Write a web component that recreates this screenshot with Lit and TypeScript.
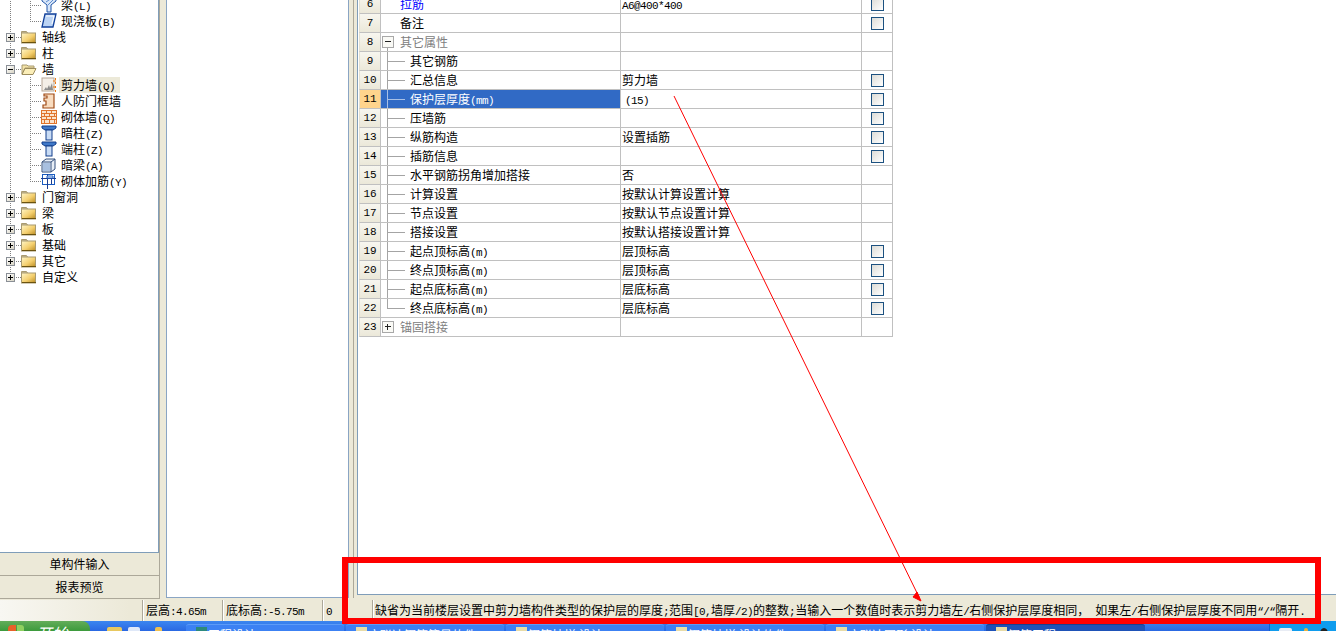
import { LitElement, html, css, svg } from "lit";
import { customElement } from "lit/decorators.js";

const t = (s: string) =>
  s.split(/([\x20-\x7e\u201c]+)/).map((p, i) => (i % 2 ? html`<span class="lat">${p}</span>` : p));

const folder = (open = false) => html`<svg class="folder" width="16" height="14" viewBox="0 0 16 14">
  <defs><linearGradient id="fg" x1="0" y1="0" x2="1" y2="1"><stop offset="0" stop-color="#fff6c8"/><stop offset=".55" stop-color="#f4cf6e"/><stop offset="1" stop-color="#b98a20"/></linearGradient></defs>
  ${open
    ? svg`<path d="M1 12V3h5l1 1h6v2H4L1 12z" fill="#f3e2a6" stroke="#a89a70"/><path d="M1 12.5 4 6.500h11l-3 6z" fill="#fbeeb8" stroke="#9c8c5c"/>`
    : svg`<path d="M.5 3V1.500h5l1 1.500z" fill="#e8e0c4" stroke="#a89a70"/><rect x=".5" y="3" width="14" height="10" fill="url(#fg)" stroke="#a89a70"/><path d="M1 12.500h14" stroke="#6b5310"/>`}
</svg>`;

const blueT = svg`<path d="M1 1h14v2l-3 2H4L1 3z" fill="#3f78c8" stroke="#123f8c"/><rect x="5" y="5" width="6" height="10" fill="#c9dcf5" stroke="#123f8c"/>`;
const icons: Record<string, unknown> = {
  beam: svg`<path d="M1 1h14v3l-5 4v7H6V8L1 4z" fill="#d8e6f8" stroke="#1f55a8"/><path d="M5 5l6-4M7 8l5-5" stroke="#5c8bd0"/>`,
  slab: svg`<path d="M4 1h11l-3 13H1z" fill="#bcd4f4" stroke="#12409a" stroke-width="1.3"/><path d="M5 3h8l-2 8" fill="none" stroke="#fff"/>`,
  shear: svg`<rect x="1" y="1" width="12" height="13" fill="#f4efe8" stroke="#b8a898"/><path d="M3 13l2-3 1 2 2-4 1 3 2-5 1 7z" fill="#8c8c8c"/><path d="M14.500 1v14" stroke="#f07a10" stroke-dasharray="2 2"/><path d="M12 4h3M12 10h3" stroke="#f07a10"/>`,
  door: svg`<path d="M3 1h10v14H2v-3h3V8H3V5h3V3H3z" fill="#f8dcc0" stroke="#a04c18" stroke-width="1.2"/>`,
  brick: svg`<rect x=".5" y="1.500" width="15" height="13" fill="#fbe3cc" stroke="#e0742c"/><path d="M1 4.500h14M1 7.500h14M1 10.500h14M5.500 2v2M10.500 2v2M3.500 5v2M8.500 5v2M13.500 5v2M5.500 8v2M10.500 8v2M3.500 11v3M8.500 11v3M13.500 11v3" stroke="#e0742c"/>`,
  col: blueT,
  box: svg`<path d="M1 5l4-3h9v10l-4 3H1z" fill="#e8eef6" stroke="#34507c"/><path d="M1 5h9v10M10 5l4-3" fill="none" stroke="#34507c"/><path d="M2 6h7v8H2z" fill="#a8c0e0"/>`,
  rebar: svg`<rect x="1.500" y="1.500" width="12" height="10" fill="none" stroke="#1a5cc0"/><path d="M0 5.500h15M6.500 1v15M10.500 5v6" stroke="#1a3c90"/><path d="M6 3h6v2H6z" fill="#fff" stroke="#1a5cc0"/>`,
};
const ico = (k: string) => html`<svg class="ico" width="16" height="16" viewBox="0 0 16 16">${icons[k]}</svg>`;

const topFolders = ["轴线", "柱"];
const wall = [
  ["剪力墙(Q)", "shear"], ["人防门框墙", "door"], ["砌体墙(Q)", "brick"], ["暗柱(Z)", "col"],
  ["端柱(Z)", "col"], ["暗梁(A)", "box"], ["砌体加筋(Y)", "rebar"],
];
const restFolders = ["门窗洞", "梁", "板", "基础", "其它", "自定义"];

type Row = { n: number; name: string; val?: string; chk?: boolean; kind?: string };
const rows: Row[] = [
  { n: 6, name: "拉筋", val: "A6@400*400", chk: true, kind: "blue" },
  { n: 7, name: "备注", chk: true, kind: "plain" },
  { n: 8, name: "其它属性", kind: "minus" },
  { n: 9, name: "其它钢筋", kind: "branch" },
  { n: 10, name: "汇总信息", val: "剪力墙", chk: true, kind: "branch" },
  { n: 11, name: "保护层厚度(mm)", val: "(15)", chk: true, kind: "branch sel" },
  { n: 12, name: "压墙筋", chk: true, kind: "branch" },
  { n: 13, name: "纵筋构造", val: "设置插筋", chk: true, kind: "branch" },
  { n: 14, name: "插筋信息", chk: true, kind: "branch" },
  { n: 15, name: "水平钢筋拐角增加搭接", val: "否", kind: "branch" },
  { n: 16, name: "计算设置", val: "按默认计算设置计算", kind: "branch" },
  { n: 17, name: "节点设置", val: "按默认节点设置计算", kind: "branch" },
  { n: 18, name: "搭接设置", val: "按默认搭接设置计算", kind: "branch" },
  { n: 19, name: "起点顶标高(m)", val: "层顶标高", chk: true, kind: "branch" },
  { n: 20, name: "终点顶标高(m)", val: "层顶标高", chk: true, kind: "branch" },
  { n: 21, name: "起点底标高(m)", val: "层底标高", chk: true, kind: "branch" },
  { n: 22, name: "终点底标高(m)", val: "层底标高", chk: true, kind: "branch last" },
  { n: 23, name: "锚固搭接", kind: "plus" },
];

const help = "缺省为当前楼层设置中剪力墙构件类型的保护层的厚度;范围[0,墙厚/2)的整数;当输入一个数值时表示剪力墙左/右侧保护层厚度相同， 如果左/右侧保护层厚度不同用\u201c/\u201c隔开.";
const tasks = ["工程设计", "广联达钢筋算量软件", "钢筋抽样 设计", "钢筋抽样 设计软件", "广联达图形 设计", "钢筋工程"];

@customElement("app-root")
export class AppRoot extends LitElement {
  static styles = css`
    :host { display: block; position: relative; width: 1336px; height: 631px; overflow: hidden; background: #ece9d8;
      font: 12px/16px "Noto Sans CJK SC", "Noto Sans CJK JP", sans-serif; color: #000; }
    .lat { font: 11px/12px "Liberation Mono", monospace; letter-spacing: -0.6px; }
    .main { display: flex; height: 600px; }
    .left { width: 159px; height: 599px; display: flex; flex-direction: column; flex: none; border-right: 1px solid #aca899; box-sizing: content-box; }
    .tree { flex: none; height: 553px; background: #fff; border-bottom: 1px solid #7f9db9; border-right: 1px solid #7f9db9; overflow: hidden; box-sizing: border-box; width: 159px; }
    .tree-in { margin-top: -3px; }
    .tr { display: flex; align-items: center; height: 16px; white-space: nowrap; }
    .gut { flex: none; width: 21px; height: 16px; padding-left: 6px; box-sizing: border-box; display: flex; align-items: center;
      background: repeating-linear-gradient(to bottom, #808080 0 1px, transparent 1px 2px) 10px 0/1px 100% no-repeat,
                  repeating-linear-gradient(to right, #808080 0 1px, transparent 1px 2px) 10px 8px/11px 1px no-repeat; }
    .gut.end { background: repeating-linear-gradient(to bottom, #808080 0 1px, transparent 1px 2px) 10px 0/1px 8px no-repeat,
                  repeating-linear-gradient(to right, #808080 0 1px, transparent 1px 2px) 10px 8px/11px 1px no-repeat; }
    .gut.thru { background: repeating-linear-gradient(to bottom, #808080 0 1px, transparent 1px 2px) 10px 0/1px 100% no-repeat; }
    .gut2 { flex: none; width: 20px; height: 16px;
      background: repeating-linear-gradient(to bottom, #808080 0 1px, transparent 1px 2px) 9px 0/1px 100% no-repeat,
                  repeating-linear-gradient(to right, #808080 0 1px, transparent 1px 2px) 9px 8px/11px 1px no-repeat; }
    .gut2.end { background: repeating-linear-gradient(to bottom, #808080 0 1px, transparent 1px 2px) 9px 0/1px 9px no-repeat,
                  repeating-linear-gradient(to right, #808080 0 1px, transparent 1px 2px) 9px 8px/11px 1px no-repeat; }
    .bx { width: 9px; height: 9px; box-sizing: border-box; border: 1px solid #8a8f96; background: linear-gradient(135deg, #fff, #d8d4c4); position: relative; display: block; }
    .bx::before { content: ""; position: absolute; left: 1px; right: 1px; top: 3px; height: 1px; background: #000; }
    .bx.p::after { content: ""; position: absolute; top: 1px; bottom: 1px; left: 3px; width: 1px; background: #000; }
    .folder { flex: none; margin-right: 5px; }
    .ico { flex: none; margin-right: 4px; }
    .lab { display: block; height: 16px; }
    .lab.on { background: #ece9d8; width: 59px; margin-left: -2px; padding-left: 2px; }
    .tab { height: 22px; line-height: 21px; text-align: center; border-bottom: 1px solid #aca899; width: 159px; box-sizing: content-box; }
    .sp1 { width: 6px; flex: none; }
    .mid { flex: none; width: 183px; height: 598px; background: #fff; border: solid #8aa5c4; border-width: 0 1px 1px; box-sizing: border-box; }
    .sp2 { flex: none; width: 8px; height: 598px; background: linear-gradient(to right, #ece9d8 0 4px, #aca899 4px 5px, #ece9d8 5px); }
    .panel { flex: 1; height: 595px; background: #fff; border-left: 1px solid #7f9db9; border-bottom: 1px solid #7f9db9; padding-left: 1px; overflow: hidden; box-sizing: border-box; }
    .table { margin-top: -5px; width: 534px; }
    .row { display: grid; grid-template-columns: 22px 240px 241px 31px; height: 19px; }
    .row > div { border-bottom: 1px solid #c0c0c0; border-right: 1px solid #c0c0c0; box-sizing: border-box; height: 19px; line-height: 18px; white-space: nowrap; overflow: hidden; }
    .num { background: linear-gradient(to bottom, #f7f6ef, #ebe8d9); text-align: center; font-family: "Liberation Mono", monospace; font-size: 11px; border-left: 1px solid #e2e0d2; }
    .num.cur { background: #ffd48c; }
    .name { display: flex; align-items: center; padding-left: 19px; }
    .name.blue { color: #0000ff; }
    .name.branch, .name.minus, .name.plus { --c: #a4a4a4; }
    .name.branch { padding-left: 29px;
      background: linear-gradient(var(--c), var(--c)) 6px 0/1px 100% no-repeat, linear-gradient(var(--c), var(--c)) 6px 9px/18px 1px no-repeat; }
    .name.last { background: linear-gradient(var(--c), var(--c)) 6px 0/1px 10px no-repeat, linear-gradient(var(--c), var(--c)) 6px 9px/18px 1px no-repeat; }
    .name.sel { background: linear-gradient(#a9c0e6, #a9c0e6) 6px 0/1px 100% no-repeat, linear-gradient(#a9c0e6, #a9c0e6) 6px 9px/18px 1px no-repeat, #316ac5; color: #fff; }
    .name.minus, .name.plus { padding-left: 1px; color: #808080; }
    .name.minus { background: linear-gradient(var(--c), var(--c)) 6px 13px/1px 6px no-repeat; }
    .tb { width: 12px; height: 12px; box-sizing: border-box; border: 1px solid #a8a8a8; background: #fafaf6; position: relative; margin-right: 6px; flex: none; }
    .tb::before { content: ""; position: absolute; left: 2px; right: 2px; top: 4px; height: 1px; background: #222; }
    .tb.p::after { content: ""; position: absolute; top: 2px; bottom: 2px; left: 4px; width: 1px; background: #222; }
    .val { padding-left: 1px; }
    .val.ind { padding-left: 4px; }
    .chk { display: flex; align-items: center; padding-left: 9px; }
    .cb { width: 13px; height: 13px; box-sizing: border-box; border: 1px solid #1c5180; background: linear-gradient(135deg, #dcdcd7, #fff); }
    .status { display: flex; height: 21px; line-height: 20px; background: linear-gradient(to right, #f8f7f2, #ece9d8 130px); }
    .status > div { box-sizing: border-box; flex: none; border-left: 1px solid #fff; box-shadow: -1px 0 0 #aca899; padding-left: 2px; white-space: nowrap; }
    .status > .s0 { width: 143px; border-left: 0; box-shadow: none; }
    .s1 { width: 80px; } .s2 { width: 100px; } .s3 { width: 50px; }
    .status > .s4 { width: 963px; padding-left: 1px; }
    .task { display: flex; height: 10px; overflow: hidden; background: linear-gradient(to bottom, #3b86f0, #2a68e2); }
    .start { flex: none; width: 90px; background: linear-gradient(to bottom, #63ad5a, #3c9a3c); border-radius: 0 8px 0 0; color: #fff; font-size: 16px; line-height: 24px; padding-left: 36px; box-sizing: border-box; font-style: italic; position: relative; }
    .flag { position: absolute; left: 8px; top: 4px; width: 8px; height: 8px; background: #e8602a; border-radius: 4px 0 0 0; }
    .flag::after { content: ""; position: absolute; left: 9px; top: 0; width: 7px; height: 8px; background: #8fd060; border-radius: 0 3px 0 0; }
    .ql { flex: none; width: 96px; padding: 6px 0 0 17px; box-sizing: border-box; display: flex; }
    .ql i { display: block; height: 12px; border-radius: 2px; flex: none; }
    .ql i:nth-child(1) { width: 15px; margin-right: 6px; background: #e8c860; }
    .ql i:nth-child(2) { width: 12px; margin-right: 15px; background: #dfe8f8; }
    .ql i:nth-child(3) { width: 7px; background: #f0c050; }
    .btn { flex: none; width: 158px; margin: 3px 2px 0 0; border-radius: 3px 3px 0 0; background: #3c81f3; color: #fff; line-height: 20px; padding-left: 22px; box-sizing: border-box; white-space: nowrap; overflow: hidden; position: relative; border-top: 1px solid #5b9bf8; }
    .btn::before { content: ""; position: absolute; left: 10px; top: 2px; width: 11px; height: 12px; background: #e8dca8; }
    .btn:nth-of-type(3)::before { background: #2c8a7c; }
    .btn.act { background: #1e52b7; width: 159px; border-top-color: #173f90; }
    .gap { flex: 1; }
    .tray { flex: none; width: 67px; background: #109ced; border-left: 1px solid #0b5fd0; padding: 7px 0 0 9px; box-sizing: border-box; display: flex; }
    .tray i { display: block; height: 11px; flex: none; border-radius: 2px; }
    .tray i:nth-child(1) { width: 13px; margin-right: 12px; background: #e8ecf4; }
    .tray i:nth-child(2) { width: 4px; margin-right: 12px; background: #e8b040; }
    .tray i:nth-child(3) { width: 8px; background: #222; border-radius: 50%; }
    .over { position: absolute; left: 0; top: 0; pointer-events: none; }
  `;

  private folderRow(name: string, open: boolean, end = false) {
    return html`<div class="tr"><span class="gut ${end ? "end" : ""}"><span class="bx ${open ? "" : "p"}"></span></span>${folder(open)}<span class="lab">${name}</span></div>`;
  }
  private childRow(name: string, k: string, on = false, end = false) {
    return html`<div class="tr"><span class="gut thru"></span><span class="gut2 ${end ? "end" : ""}"></span>${ico(k)}<span class="lab ${on ? "on" : ""}">${t(name)}</span></div>`;
  }

  render() {
    return html`
      <div class="main">
        <div class="left">
          <div class="tree"><div class="tree-in">
            ${this.childRow("梁(L)", "beam")}
            ${this.childRow("现浇板(B)", "slab", false, true)}
            ${topFolders.map((f) => this.folderRow(f, false))}
            ${this.folderRow("墙", true)}
            ${wall.map((w, i) => this.childRow(w[0], w[1], i === 0, i === wall.length - 1))}
            ${restFolders.map((f, i) => this.folderRow(f, false, i === restFolders.length - 1))}
          </div></div>
          <div class="tab">单构件输入</div>
          <div class="tab">报表预览</div>
        </div>
        <div class="sp1"></div>
        <div class="mid"></div>
        <div class="sp2"></div>
        <div class="panel"><div class="table">
          ${rows.map((r) => html`<div class="row">
            <div class="num ${r.n === 11 ? "cur" : ""}">${r.n}</div>
            <div class="name ${r.kind}">
              ${r.kind === "minus" ? html`<span class="tb"></span>` : r.kind === "plus" ? html`<span class="tb p"></span>` : ""}
              <span>${t(r.name)}</span>
            </div>
            <div class="val ${r.n === 11 ? "ind" : ""}">${t(r.val ?? "")}</div>
            <div class="chk">${r.chk ? html`<span class="cb"></span>` : ""}</div>
          </div>`)}
        </div></div>
      </div>
      <div class="status">
        <div class="s0"></div>
        <div class="s1">${t("层高:4.65m")}</div>
        <div class="s2">${t("底标高:-5.75m")}</div>
        <div class="s3">${t("0")}</div>
        <div class="s4">${t(help)}</div>
      </div>
      <div class="task">
        <div class="start"><span class="flag"></span>开始</div>
        <div class="ql"><i></i><i></i><i></i></div>
        ${tasks.map((x, i) => html`<div class="btn ${i === 5 ? "act" : ""}">${x}</div>`)}
        <div class="gap"></div>
        <div class="tray"><i></i><i></i><i></i></div>
      </div>
      <svg class="over" width="1336" height="631" viewBox="0 0 1336 631">
        <rect x="345" y="560" width="973" height="61" fill="none" stroke="#ff0000" stroke-width="6"/>
        <line x1="674" y1="96" x2="919" y2="597" stroke="#ff0000" stroke-width="1"/>
        <path d="M917 592 913 597 921 601z" fill="#ff0000" stroke="#ff0000" stroke-width="1"/>
      </svg>
    `;
  }
}
